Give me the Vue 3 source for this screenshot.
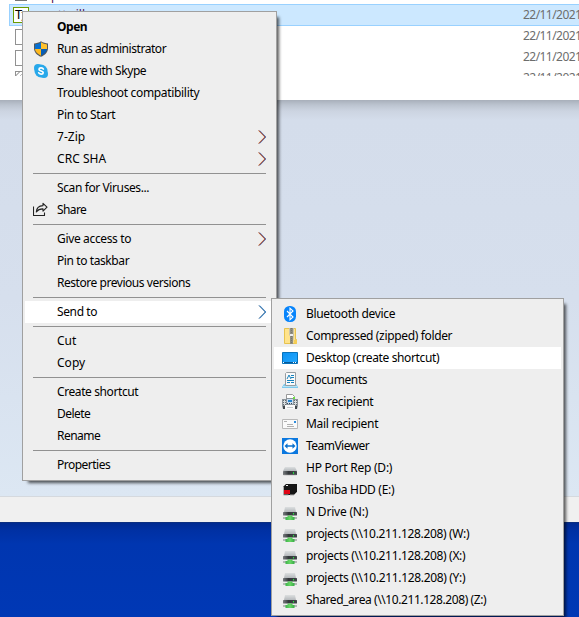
<script setup>
const vFit = {
  mounted(el, { value }) {
    const gap = (value - 0.8 - el.getBoundingClientRect().width) / el.textContent.length
    el.style.letterSpacing = `${gap.toFixed(3)}px`
  },
}

const mainGroups = [
  [
    { text: 'Open', w: 31, bold: true },
    { text: 'Run as administrator', w: 110, icon: 'shield' },
    { text: 'Share with Skype', w: 90, icon: 'skype' },
    { text: 'Troubleshoot compatibility', w: 143 },
    { text: 'Pin to Start', w: 59 },
    { text: '7-Zip', w: 29, arrow: true },
    { text: 'CRC SHA', w: 50, arrow: true },
  ],
  [
    { text: 'Scan for Viruses...', w: 93 },
    { text: 'Share', w: 30, icon: 'share' },
  ],
  [
    { text: 'Give access to', w: 75, arrow: true },
    { text: 'Pin to taskbar', w: 73 },
    { text: 'Restore previous versions', w: 134 },
  ],
  [{ text: 'Send to', w: 41, arrow: true, active: true }],
  [
    { text: 'Cut', w: 20 },
    { text: 'Copy', w: 29 },
  ],
  [
    { text: 'Create shortcut', w: 82 },
    { text: 'Delete', w: 34 },
    { text: 'Rename', w: 44 },
  ],
  [{ text: 'Properties', w: 54 }],
]

const sendTo = [
  { text: 'Bluetooth device', w: 90, icon: 'bluetooth' },
  { text: 'Compressed (zipped) folder', w: 147, icon: 'zip' },
  { text: 'Desktop (create shortcut)', w: 134, icon: 'desktop', active: true },
  { text: 'Documents', w: 62, icon: 'documents' },
  { text: 'Fax recipient', w: 68, icon: 'fax' },
  { text: 'Mail recipient', w: 73, icon: 'mail' },
  { text: 'TeamViewer', w: 64, icon: 'teamviewer' },
  { text: 'HP Port Rep (D:)', w: 87, icon: 'drive' },
  { text: 'Toshiba HDD (E:)', w: 89, icon: 'toshiba' },
  { text: 'N Drive (N:)', w: 63, icon: 'netdrive' },
  { text: 'projects (\\\\10.211.128.208) (W:)', w: 164, icon: 'netdrive' },
  { text: 'projects (\\\\10.211.128.208) (X:)', w: 160, icon: 'netdrive' },
  { text: 'projects (\\\\10.211.128.208) (Y:)', w: 160, icon: 'netdrive' },
  { text: 'Shared_area (\\\\10.211.128.208) (Z:)', w: 181, icon: 'netdrive' },
]
</script>

<template>
  <div class="screen">
    <svg class="defs" width="0" height="0">
      <linearGradient id="case" x1="0" y1="0" x2="0" y2="1">
        <stop offset="0" stop-color="#dcdfe0" /><stop offset="1" stop-color="#b4b8bb" />
      </linearGradient>
      <linearGradient id="face" x1="0" y1="0" x2="1" y2="0">
        <stop offset="0" stop-color="#777b7e" /><stop offset=".4" stop-color="#34383b" /><stop offset="1" stop-color="#42474a" />
      </linearGradient>
      <linearGradient id="pipe" x1="0" y1="0" x2="1" y2="0">
        <stop offset="0" stop-color="#3db44b" /><stop offset=".5" stop-color="#69d766" /><stop offset="1" stop-color="#35aa44" />
      </linearGradient>
      <linearGradient id="screen" x1="0" y1="0" x2="1" y2="1">
        <stop offset="0" stop-color="#0c91f2" /><stop offset="1" stop-color="#25a9ff" />
      </linearGradient>

      <symbol id="shield" viewBox="0 0 16 16">
        <path d="M8 .2C6 1.500 3.500 2.300 1 2.500v4.700c0 4 3 6.800 7 8.600 4-1.800 7-4.600 7-8.600V2.500C12.500 2.300 10 1.500 8 .2z" fill="#53585c" />
        <path d="M8 1.300V8H2V3.400c2.200-.2 4.200-.9 6-2.100z" fill="#0870d1" />
        <path d="M8 1.300V8h6V3.400c-2.200-.2-4.200-.9-6-2.100z" fill="#ffc12d" />
        <path d="M2 8h6v6.700C4.500 13 2.200 11 2 8z" fill="#ffb91e" />
        <path d="M14 8H8v6.700c3.500-1.700 5.800-3.700 6-6.700z" fill="#075eb6" />
      </symbol>
      <symbol id="skype" viewBox="0 0 16 16">
        <circle cx="8" cy="8" r="6.500" fill="#28a8ea" /><circle cx="5" cy="5" r="4" fill="#28a8ea" /><circle cx="11" cy="11" r="4" fill="#28a8ea" />
        <path d="M10.300 6C9.700 4.500 6.100 4.400 6 6.300c-.1 2 4.300 1.400 4.200 3.400-.1 2-3.900 1.700-4.500.1" fill="none" stroke="#fff" stroke-width="1.700" stroke-linecap="round" />
      </symbol>
      <symbol id="share" viewBox="0 0 16 16">
        <path d="M.5 4.500v9h11v-3M10 1.300l4 3.900-4 3.900V6.900C7 6.800 5 7.700 3.300 10c.2-3.600 2.600-6.200 6.700-6.400z" fill="none" stroke="#222" stroke-width="1.100" stroke-linejoin="round" />
      </symbol>
      <symbol id="bluetooth" viewBox="0 0 16 16">
        <rect x="2" y="0" width="12" height="16" rx="5.500" fill="#0784fb" />
        <path d="M5 5l6 6-3 2.800V2.200L11 5l-6 6" fill="none" stroke="#fff" stroke-width="1.100" />
      </symbol>
      <symbol id="zip" viewBox="0 0 16 16">
        <path d="M2.500.500h11v11h1v4h-12z" fill="#ffe38b" stroke="#e7c34f" />
        <path d="M12 12h3v3.500h-3z" fill="#f6ce55" />
        <path d="M7 0h5v8L11 16H8V8L7 7z" fill="#c9c3a9" />
        <path d="M8 1h3M8 3h3M8 5h3M8 9h3M8 11h3M8 13h3M8 15h3" stroke="#5c5c59" />
        <path d="M9.500 0v16" stroke="#77776e" stroke-dasharray="1 1" /><path d="M8 6h3v2H8z" fill="#eee" />
      </symbol>
      <symbol id="desktop" viewBox="0 0 16 16">
        <path d="M.5 2.500h15v11H.5z" fill="url(#screen)" stroke="#0872bb" />
        <path d="M1 12h14v1H1z" fill="#075a98" /><path d="M1 12h1v1H1zm10 0h1v1h-1zm2 0h1v1h-1z" fill="#fff" />
      </symbol>
      <symbol id="documents" viewBox="0 0 16 16">
        <path d="M2 12h12l2 3v1H0v-1z" fill="#7dcaed" />
        <path d="M4.500.500h9v13h-10v-12z" fill="#fafafa" stroke="#969da1" />
        <path d="M5 7l2-4 2 4M9 3.500h3M9 5.500h3M5 8.500h7M5 10.500h3M9 10.500h3" fill="none" stroke="#1683bd" />
        <path d="M1 14.500h14" stroke="#b6e3f6" />
      </symbol>
      <symbol id="fax" viewBox="0 0 16 16">
        <path d="M4.500 4V.500h6l2 2V5" fill="#fff" stroke="#999" />
        <path d="M0 5h4V4h8v1h4v7l-1 3H1l-1-3z" fill="#8d959b" />
        <path d="M1 6h3v5H1zM12 6h3v5h-3z" fill="#d8dddf" />
        <path d="M1.500 6v5M3.500 6v5M12.500 6v5M14.500 6v5" stroke="#646c72" stroke-dasharray="1 1" />
        <path d="M5 5h6v5H5z" fill="#c9dced" /><path d="M6 6h4v2H6z" fill="#2382ce" />
        <path d="M5 9h1v1H5zm2 0h1v1H7zm2 0h1v1H9z" fill="#35495b" />
        <path d="M11 3h2v2h-2z" fill="#6de340" />
        <path d="M1 12h2v3H1zm12 0h2v3h-2z" fill="#41474b" /><path d="M3 11h10v4H3z" fill="#fafafa" /><path d="M5 13.500h6" stroke="#c7ccce" />
      </symbol>
      <symbol id="mail" viewBox="0 0 16 16">
        <path d="M.5 3.500h15v9H.5z" fill="#fafafa" stroke="#b9b9b9" />
        <path d="M2 5.500h3M5 8.500h6M5 10.500h7" stroke="#b1b1b1" /><path d="M12 5h2v2h-2z" fill="#2f8ddd" />
      </symbol>
      <symbol id="teamviewer" viewBox="0 0 16 16">
        <rect width="16" height="16" fill="#0b78df" /><circle cx="8" cy="8" r="6.700" fill="#fff" />
        <path d="M2.500 8l3-2.700v1.900h5V5.300l3 2.700-3 2.700V8.800h-5v1.900z" fill="#0b70cd" />
      </symbol>
      <symbol id="drive" viewBox="0 0 16 16">
        <path d="M3 7h10l2 4H1z" fill="url(#case)" />
        <rect x="1" y="11" width="14" height="4" rx=".5" fill="url(#face)" /><path d="M1.500 15h13" stroke="#aaa" stroke-width=".6" />
        <path d="M11 12h1v2h-1z" fill="#25d83e" />
      </symbol>
      <symbol id="toshiba" viewBox="0 0 16 16">
        <path d="M4 2h11v8l-3 3H1V5z" fill="#151515" />
        <path d="M1.500 5v8h5M8 13h4l3-3" fill="none" stroke="#aaa" /><path d="M2 8h6v4H2z" fill="#df0515" />
        <path d="M4 3h2v1H4z" fill="#eee" />
      </symbol>
      <symbol id="netdrive" viewBox="0 0 16 16">
        <path d="M3 3h10l1 5H2z" fill="url(#case)" />
        <rect x="1" y="8" width="14" height="3.500" rx=".5" fill="url(#face)" />
        <path d="M11 9h1v1.500h-1z" fill="#25e83e" />
        <path d="M1 13h14v2H1z" fill="#b4b9b7" />
        <path d="M5.500 11.500h5V13h2v3h-9v-3h2z" fill="url(#pipe)" />
      </symbol>
    </svg>

    <section class="files">
      <div class="sliver"><i class="chip"></i><span class="name">p</span></div>
      <div class="file selected">
        <span class="tt">T<small>Z</small></span>
        <span class="name">putty ill</span>
        <span class="date">22/11/2021</span>
      </div>
      <div v-for="n in 3" :key="n" class="file">
        <i class="page" :class="{ sketch: n === 3 }"></i>
        <span class="date">22/11/2021</span>
      </div>
    </section>
    <section class="canvas"></section>
    <section class="status"></section>
    <section class="wallpaper"></section>

    <nav class="menu main">
      <div v-for="(group, g) in mainGroups" :key="g" class="group">
        <div v-for="item in group" :key="item.text" class="item" :class="{ active: item.active }">
          <span class="slot"><svg v-if="item.icon" class="icon"><use :href="'#' + item.icon" /></svg></span>
          <span v-fit="item.w" class="label" :class="{ bold: item.bold }">{{ item.text }}</span>
          <svg v-if="item.arrow" class="arrow" viewBox="0 0 9 14">
            <path v-if="!item.active" class="fringe-a" d="M.4 .5L6.700 7 .4 13.500" />
            <path class="fringe-b" d="M1.700 .5L8 7 1.700 13.500" />
            <path :class="item.active ? 'core-active' : 'core'" d="M1 .5L7.300 7 1 13.500" />
          </svg>
        </div>
      </div>
    </nav>

    <nav class="menu sub">
      <div v-for="item in sendTo" :key="item.text" class="item" :class="{ active: item.active }">
        <span class="slot"><svg class="icon"><use :href="'#' + item.icon" /></svg></span>
        <span v-fit="item.w" class="label">{{ item.text }}</span>
      </div>
    </nav>
  </div>
</template>

<style>
body { overflow: hidden; }
</style>

<style scoped>
.screen {
  position: relative;
  display: flex;
  flex-direction: column;
  width: 579px;
  height: 617px;
  overflow: hidden;
  font: 12px/22px "Noto Sans", "Open Sans", sans-serif;
  color: #000;
}
.defs { position: absolute; }
.files { height: 76px; overflow: hidden; background: #fff; border-bottom: 24px solid #fff; }
.sliver { display: flex; height: 4px; overflow: hidden; padding-left: 15px; }
.chip { width: 12px; height: 1px; background: #777; }
.sliver .name { margin-left: 24px; line-height: 1px; margin-top: -5px; }
.file { display: flex; align-items: center; height: 21px; margin-left: 9px; padding-left: 6px; }
.selected { box-sizing: border-box; height: 22px; padding-left: 3px; background: #cce8ff; border: 1px solid #99d1ff; border-right: 0; }
.tt { display: flex; box-sizing: border-box; width: 16px; height: 16px; border: 1px solid #6c9c00; background: #fff; font: 13px/12px "Noto Sans", sans-serif; padding-left: 1px; overflow: hidden; }
.tt small { font-size: 12px; margin-left: -1px; padding-top: 3px; }
.name { margin-left: 14px; color: #501050; }
.date { width: 56px; margin-left: auto; color: #6d6d6d; letter-spacing: -.55px; white-space: nowrap; overflow: hidden; }
.file:not(.selected) .date { padding-bottom: 2px; }
.page { box-sizing: border-box; width: 12px; height: 16px; border: 1px solid #919191; background: #fff; }
.page.sketch { background: repeating-linear-gradient(135deg, #fff 0 2px, #bbb 2px 3px); }
.canvas { height: 396px; background: linear-gradient(#a8afba 0, #bcc4d0 5px, #ccd4e1 11px, #d4ddeb 20px, #d6dfed 50%, #dce7f3 100%); }
.status { box-sizing: border-box; height: 26px; background: #f0f0f0; border-top: 1px solid #d5d9de; }
.wallpaper { flex: 1; background: linear-gradient(#17346f 0, #002a91 1px, #0030a3 8px, #0036b0 22px, #0038b5 100%); }
.menu {
  position: absolute;
  box-sizing: border-box;
  padding: 4px 2px;
  background: #eee;
  border: 1px solid #a0a0a0;
  box-shadow: 4px 4px 3px -2px rgba(0, 0, 0, .65);
}
.main { left: 22px; top: 11px; width: 255px; }
.sub { left: 271px; top: 298px; width: 293px; }
.group + .group::before { content: ""; display: block; height: 1px; margin: 3px 8px; background: #919191; }
.item { display: flex; align-items: center; height: 22px; }
.item.active { background: #fff; }
.slot { display: flex; flex: none; width: 32px; padding-left: 8px; box-sizing: border-box; }
.icon { width: 16px; height: 16px; }
.label { white-space: pre; }
.bold { font-weight: 700; }
.arrow { width: 9px; height: 14px; margin-left: auto; margin-right: 7px; }
.arrow path { fill: none; stroke-width: .9; }
.fringe-a { stroke: #f0a04a; }
.fringe-b { stroke: #4b9be8; }
.core { stroke: #7a1420; }
.core-active { stroke: #174f80; }
</style>
